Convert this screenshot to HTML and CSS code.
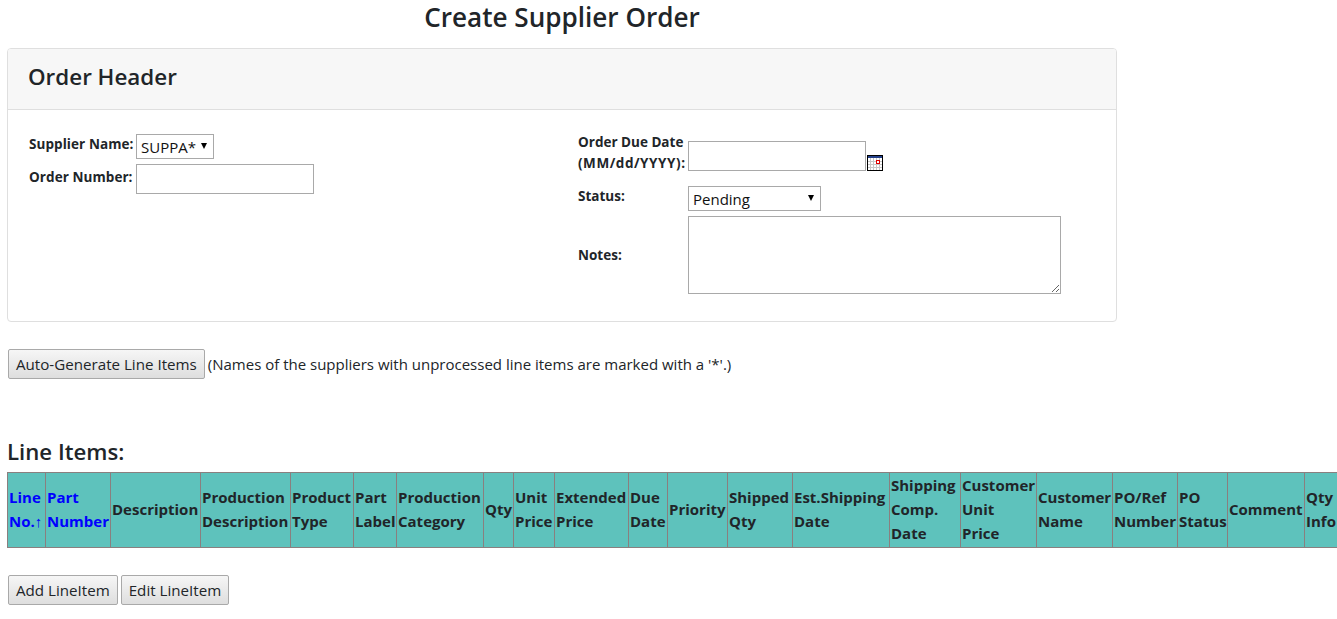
FILE: index.html
```html
<!DOCTYPE html>
<html lang="en">
<head>
<meta charset="utf-8">
<title>Create Supplier Order</title>
<link rel="stylesheet" href="styles.css">
</head>
<body>
<div class="page">
  <h2 class="title">Create Supplier Order</h2>
  <section class="card">
    <h4 class="card-header">Order Header</h4>
    <div class="card-body">
      <div class="col-left">
        <div class="row row-supplier">
          <label class="lbl lbl-left">Supplier Name:</label>
          <span class="sel-wrap sel-wrap-supplier"><select class="sel sel-supplier"><option>SUPPA*</option></select></span>
        </div>
        <div class="row row-number">
          <label class="lbl lbl-left">Order Number:</label>
          <input class="inp" type="text">
        </div>
      </div>
      <div class="col-right">
        <div class="row row-due">
          <label class="lbl lbl-right lbl-due">Order Due Date<br><span class="fmt">(MM/dd/YYYY):</span></label>
          <input class="inp" type="text">
          <svg class="cal" width="16" height="16" viewBox="0 0 16 16" aria-hidden="true">
            <rect width="16" height="16" fill="#000"/>
            <rect x="1" y="1" width="14" height="14" fill="#fff"/>
            <rect x="1" y="1" width="14" height="2" fill="#24408a"/>
            <path d="M1 6.5h14M1 9.5h14M1 12.5h14M3.5 3v12M6.5 3v12M9.5 3v12M12.5 3v12" stroke="#c8c8c8" stroke-width="1" fill="none"/>
            <rect x="9.5" y="5.5" width="3" height="3" fill="#fff" stroke="#e00000"/>
          </svg>
        </div>
        <div class="row row-status">
          <label class="lbl lbl-right">Status:</label>
          <span class="sel-wrap sel-wrap-status"><select class="sel sel-status"><option>Pending</option></select></span>
        </div>
        <div class="row row-notes">
          <label class="lbl lbl-right">Notes:</label>
          <textarea class="notes"></textarea>
        </div>
      </div>
    </div>
  </section>
  <div class="auto-row">
    <button class="btn" type="button">Auto-Generate Line Items</button>
    <span class="hint">(Names of the suppliers with unprocessed line items are marked with a '*'.)</span>
  </div>
  <h4 class="items-title">Line Items:</h4>
  <div class="table-wrap">
    <table class="grid">
      <thead>
        <tr>
          <th><a class="sort">Line No.<span class="arrow">↑</span></a></th>
          <th><a class="sort">Part Number</a></th>
          <th>Description</th>
          <th>Production Description</th>
          <th>Product Type</th>
          <th>Part Label</th>
          <th>Production Category</th>
          <th>Qty</th>
          <th>Unit Price</th>
          <th>Extended Price</th>
          <th>Due Date</th>
          <th>Priority</th>
          <th>Shipped Qty</th>
          <th>Est.Shipping Date</th>
          <th>Shipping Comp. Date</th>
          <th>Customer Unit Price</th>
          <th>Customer Name</th>
          <th>PO/Ref Number</th>
          <th>PO Status</th>
          <th>Comment</th>
          <th>Qty Info</th>
        </tr>
      </thead>
    </table>
  </div>
  <div class="actions">
    <button class="btn" type="button">Add LineItem</button>
    <button class="btn" type="button">Edit LineItem</button>
  </div>
</div>
</body>
</html>
```
FILE: styles.css
```css
* { box-sizing: border-box; }
html, body { margin: 0; padding: 0; }
body {
  background: #fff;
  color: #212529;
  font-family: "Open Sans", "Noto Sans", sans-serif;
  font-size: 15px;
  overflow: hidden;
  height: 619px;
}
.page { padding: 0 0 0 7px; width: 1337px; overflow: hidden; }
.title {
  width: 1110px;
  margin: 0;
  height: 48px;
  text-align: center;
  font-size: 26.1px;
  font-weight: 600;
  line-height: 35px;
}
.card {
  width: 1110px;
  height: 274px;
  border: 1px solid #dfdfdf;
  border-radius: 4px;
  overflow: hidden;
}
.card-header {
  margin: 0;
  height: 61px;
  padding: 0 20px;
  background: #f7f7f7;
  border-bottom: 1px solid #dfdfdf;
  font-size: 22.4px;
  font-weight: 600;
  line-height: 55px;
}
.card-body { display: flex; padding: 0 20px; }
.col-left { width: 550px; padding-top: 24px; }
.col-right { padding-top: 21px; }
.row { display: flex; }
.lbl { font-size: 13.5px; font-weight: 700; line-height: 21px; }
.lbl-left { width: 108px; padding-left: 1px; letter-spacing: 0.07px; white-space: nowrap; }
.lbl-right { width: 110px; }
.row-number { margin-top: 5px; }
.row-number .lbl { padding-top: 3px; }
.lbl-due { margin-top: -9px; white-space: nowrap; }
.fmt { letter-spacing: 0.55px; }
.row-due { align-items: flex-start; height: 55px; padding-top: 10px; }
.row-status { height: 30px; }
.inp {
  width: 178px;
  height: 30px;
  border: 1px solid #a9a9a9;
  background: #fff;
  padding: 1px 2px;
}
.cal { margin: 14px 0 0 1px; }
.sel-wrap { position: relative; display: block; height: 25px; }
.sel-wrap::after {
  content: "";
  position: absolute;
  top: 9px;
  right: 7px;
  border-style: solid;
  border-width: 6px 3px 0;
  border-color: #000 transparent transparent;
  pointer-events: none;
}
.sel {
  display: block;
  height: 25px;
  border: 1px solid #a9a9a9;
  border-radius: 0;
  background: #fff;
  color: #111;
  font-family: inherit;
  font-size: 15px;
  padding: 0 0 0 4px;
  appearance: none;
}
.sel-supplier { width: 78px; }
.sel-status { width: 133px; }
.row-notes { align-items: center; }
.notes {
  width: 373px;
  height: 78px;
  border: 1px solid #a9a9a9;
  display: block;
  font-family: inherit;
}
.auto-row { display: flex; align-items: center; margin-top: 27px; padding-left: 1px; height: 30px; }
.btn {
  height: 30px;
  padding: 0 7px;
  border: 1px solid #a9a9a9;
  border-radius: 2px;
  background: linear-gradient(#f6f6f6, #dedede);
  color: #212529;
  font-family: inherit;
  font-size: 15.15px;
  white-space: nowrap;
}
.hint { margin-left: 3px; font-size: 15px; white-space: nowrap; }
.items-title {
  margin: 57px 0 0;
  height: 36px;
  font-size: 22.2px;
  font-weight: 600;
  line-height: 31px;
}
.table-wrap { width: 1330px; overflow: hidden; }
.grid {
  table-layout: fixed;
  width: 1338px;
  border-collapse: collapse;
  background: #5ec2bc;
  font-size: 15px;
  line-height: 24px;
}
.grid th {
  height: 74px;
  padding: 0 1px 2px;
  border: 1px solid #8a7f7f;
  text-align: left;
  font-weight: 700;
  vertical-align: middle;
  overflow: hidden;
}
.grid th:nth-child(1) { width: 38px; padding-left: 1px; padding-right: 0; }
.grid th:nth-child(2) { width: 65px; }
.grid th:nth-child(3) { width: 90px; }
.grid th:nth-child(4) { width: 90px; }
.grid th:nth-child(5) { width: 63px; }
.grid th:nth-child(6) { width: 43px; }
.grid th:nth-child(7) { width: 87px; }
.grid th:nth-child(8) { width: 30px; }
.grid th:nth-child(9) { width: 41px; }
.grid th:nth-child(10) { width: 74px; }
.grid th:nth-child(11) { width: 39px; }
.grid th:nth-child(12) { width: 60px; }
.grid th:nth-child(13) { width: 65px; }
.grid th:nth-child(14) { width: 97px; }
.grid th:nth-child(15) { width: 71px; }
.grid th:nth-child(16) { width: 76px; }
.grid th:nth-child(17) { width: 76px; }
.grid th:nth-child(18) { width: 65px; }
.grid th:nth-child(19) { width: 50px; }
.grid th:nth-child(20) { width: 77px; }
.grid th:nth-child(21) { width: 40px; }
.sort { color: #0000ff; }
.arrow { font-weight: 400; }
.actions { display: flex; gap: 3px; margin-top: 27px; padding-left: 1px; }
```
